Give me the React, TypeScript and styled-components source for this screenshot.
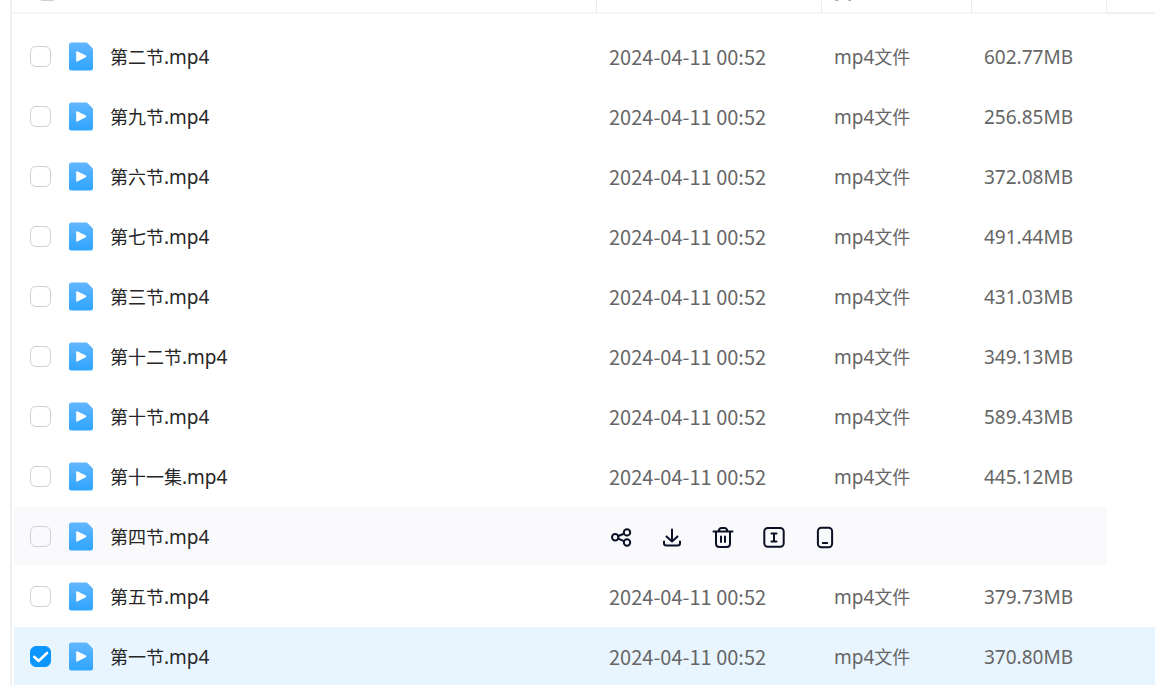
import React from 'react';
import styled, { createGlobalStyle, css } from 'styled-components';

const latin = `'Noto Sans', 'Noto Sans CJK SC', sans-serif`;
const cjk = `'Noto Sans CJK SC', sans-serif`;

const GlobalStyle = createGlobalStyle`
  *, *::before, *::after { box-sizing: border-box; }
  body {
    margin: 0;
    background: #fff;
    font-family: ${latin};
    color: #262626;
  }
`;

const Page = styled.main`
  height: 100vh;
  padding-left: 10px;
  overflow: hidden;
`;

const Panel = styled.section`
  min-height: 100%;
  border-left: 2px solid #f0f0f0;
`;

const FileTable = styled.table`
  width: 100%;
  table-layout: fixed;
  border-collapse: separate;
  border-spacing: 0;
`;

const Col = styled.col<{ $width?: number }>`
  width: ${(p) => (p.$width ? `${p.$width}px` : 'auto')};
`;

const HeadCell = styled.th`
  padding: 0 12px;
  border-bottom: 2px solid #f6f6f7;
  border-left: 1px solid #ebebed;
  font-family: ${cjk};
  font-size: 18px;
  font-weight: 400;
  text-align: left;
  color: #666;
  &:first-child {
    border-left: 0;
  }
  &:nth-child(4) {
    border-right: 1px solid #ebebed;
  }
  &:last-child {
    border-left: 0;
    border-bottom-color: #efeff5;
  }
`;

const HeadClip = styled.div<{ $inset?: number }>`
  display: flex;
  align-items: flex-end;
  height: 12px;
  padding: 0 0 11px ${(p) => p.$inset ?? 0}px;
  overflow: hidden;
  line-height: 20px;
`;

const Body = styled.tbody`
  &::before {
    content: '';
    display: block;
    height: 13px;
  }
`;

type RowState = 'normal' | 'hover' | 'selected';

const Cell = styled.td<{ $state: RowState; $last?: boolean }>`
  height: 60px;
  padding: 0 0 0 13px;
  border-bottom: 2px solid #fff;
  background: #fff;
  color: #666;
  white-space: nowrap;
  ${(p) => p.$state === 'hover' && !p.$last && css`background: #fafafc;`}
  ${(p) => p.$state === 'selected' && css`background: #e8f5ff;`}
  &:first-child {
    padding-left: 16px;
    border-left: 2px solid #fff;
  }
`;

const NameLabel = styled.label`
  display: flex;
  align-items: center;
  color: #262626;
`;

const Check = styled.input`
  appearance: none;
  flex: none;
  width: 21px;
  height: 21px;
  margin: 0 17px 0 0;
  border: 1px solid #d0d0d3;
  border-radius: 6px;
  background: transparent center / 21px 21px no-repeat;
  &:checked {
    border-color: #0a95ff;
    background-color: #0a95ff;
    background-image: url("data:image/svg+xml,%3Csvg xmlns='http://www.w3.org/2000/svg' viewBox='0 0 21 21' fill='none' stroke='white' stroke-width='2.6' stroke-linecap='round' stroke-linejoin='round'%3E%3Cpath d='M4.2 10.8 8.6 15 17 7'/%3E%3C/svg%3E");
  }
`;

const FileGlyph = styled.svg`
  flex: none;
  width: 26px;
  height: 30px;
  margin-right: 16px;
`;

const MixedText = styled.span`
  display: inline-flex;
  align-items: baseline;
  line-height: 28px;
`;

const Han = styled.span`
  font-family: ${cjk};
  font-size: 18px;
`;

const Alpha = styled.span`
  font-size: 19px;
`;

const Time = styled.time`
  display: block;
  padding-top: 2px;
  font-family: ${cjk};
  font-size: 20px;
  line-height: 28px;
`;

const Size = styled.span`
  display: block;
  padding-top: 2px;
  font-size: 19px;
  line-height: 28px;
`;

const Actions = styled.div`
  display: flex;
  gap: 27px;
  padding-top: 2px;
`;

const ActionButton = styled.button`
  display: block;
  width: 24px;
  height: 24px;
  padding: 0;
  border: 0;
  background: none;
  color: #0b1024;
  cursor: pointer;
`;

const ActionSvg = styled.svg`
  display: block;
  width: 24px;
  height: 24px;
  fill: none;
  stroke: currentColor;
  stroke-width: 2;
  stroke-linecap: round;
  stroke-linejoin: round;
`;

const VideoIcon = () => (
  <FileGlyph viewBox="0 0 26 30" aria-hidden="true">
    <defs>
      <linearGradient id="sheet" x1="0" y1="0" x2="0" y2="1">
        <stop offset="0" stopColor="#61b6ff" />
        <stop offset="1" stopColor="#30a5ff" />
      </linearGradient>
    </defs>
    <path d="M3.5 1.600H18q1 0 1.700.7L24.300 7q.7.7.7 1.700V27a2.500 2.500 0 0 1-2.500 2.500H3.500A2.500 2.500 0 0 1 1 27V4.100A2.500 2.500 0 0 1 3.500 1.600Z" fill="url(#sheet)" />
    <path d="M8.200 11v8.800q0 1.200 1.100.7l8.500-4.300q1-.8 0-1.600L9.300 10.300q-1.100-.5-1.100.7Z" fill="#fff" />
  </FileGlyph>
);

const actions = [
  {
    label: '分享',
    art: (
      <>
        <circle cx="6.200" cy="12.300" r="3.200" />
        <circle cx="18" cy="7.400" r="3.200" />
        <circle cx="18" cy="17.500" r="3.200" />
        <path d="M9.200 11 15 8.700M9.200 13.600 15 16.200" />
      </>
    ),
  },
  {
    label: '下载',
    art: <path d="M12 4.500V16M6.500 11.500 12 16.500 17.500 11.500M4 16.500v1.700q0 2.300 2.300 2.300h11.400q2.300 0 2.300-2.300v-1.700" />,
  },
  {
    label: '删除',
    art: (
      <>
        <path d="M2.500 6.500h19M5 6.500v12q0 3.500 3.500 3.500h7q3.500 0 3.500-3.500v-12M7.500 6.200Q8.300 3 10.500 3h3q2.200 0 3 3.200" />
        <path d="M10 11.500v5.500M14 11.500v5.500" />
      </>
    ),
  },
  {
    label: '重命名',
    art: (
      <>
        <rect x="2.300" y="3" width="19.400" height="18.700" rx="3.500" />
        <path d="M9.500 8.500h5M12 8.500v8M9.500 16.500h5" />
      </>
    ),
  },
  {
    label: '发送到手机',
    art: (
      <>
        <rect x="4.900" y="2.700" width="14.200" height="19.600" rx="3.500" />
        <path d="M9.800 18h4.400" />
      </>
    ),
  },
];

const files: { name: string; size: string; state?: RowState }[] = [
  { name: '第二节', size: '602.77MB' },
  { name: '第九节', size: '256.85MB' },
  { name: '第六节', size: '372.08MB' },
  { name: '第七节', size: '491.44MB' },
  { name: '第三节', size: '431.03MB' },
  { name: '第十二节', size: '349.13MB' },
  { name: '第十节', size: '589.43MB' },
  { name: '第十一集', size: '445.12MB' },
  { name: '第四节', size: '', state: 'hover' },
  { name: '第五节', size: '379.73MB' },
  { name: '第一节', size: '370.80MB', state: 'selected' },
];

export default function App() {
  return (
    <Page>
      <GlobalStyle />
      <Panel>
        <FileTable>
          <colgroup>
            <Col />
            <Col $width={225} />
            <Col $width={150} />
            <Col $width={136} />
            <Col $width={48} />
          </colgroup>
          <thead>
            <tr>
              <HeadCell>
                <HeadClip $inset={13}>
                  <Check type="checkbox" aria-label="全选" />
                </HeadClip>
              </HeadCell>
              <HeadCell><HeadClip /></HeadCell>
              <HeadCell><HeadClip>类型</HeadClip></HeadCell>
              <HeadCell><HeadClip /></HeadCell>
              <HeadCell><HeadClip /></HeadCell>
            </tr>
          </thead>
          <Body>
            {files.map(({ name, size, state = 'normal' }) => (
              <tr key={name}>
                <Cell $state={state}>
                  <NameLabel>
                    <Check type="checkbox" defaultChecked={state === 'selected'} />
                    <VideoIcon />
                    <MixedText><Han>{name}</Han><Alpha>.mp4</Alpha></MixedText>
                  </NameLabel>
                </Cell>
                {state === 'hover' ? (
                  <Cell $state={state} colSpan={3}>
                    <Actions>
                      {actions.map((a) => (
                        <ActionButton key={a.label} type="button" aria-label={a.label}>
                          <ActionSvg viewBox="0 0 24 24">{a.art}</ActionSvg>
                        </ActionButton>
                      ))}
                    </Actions>
                  </Cell>
                ) : (
                  <>
                    <Cell $state={state}><Time dateTime="2024-04-11T00:52">2024-04-11 00:52</Time></Cell>
                    <Cell $state={state}><MixedText><Alpha>mp4</Alpha><Han>文件</Han></MixedText></Cell>
                    <Cell $state={state}><Size>{size}</Size></Cell>
                  </>
                )}
                <Cell $state={state} $last />
              </tr>
            ))}
          </Body>
        </FileTable>
      </Panel>
    </Page>
  );
}
